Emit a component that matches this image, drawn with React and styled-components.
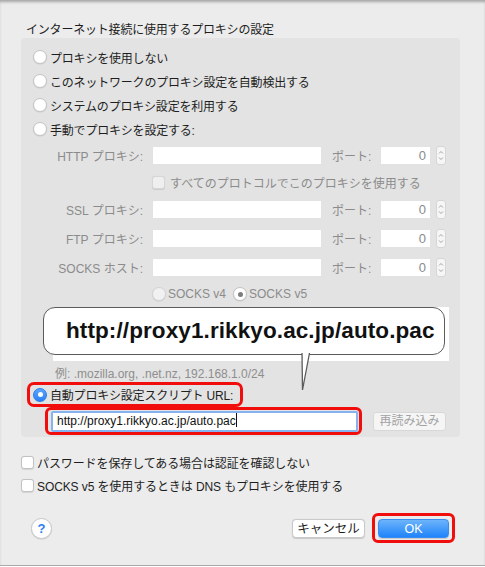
import React from "react";
import styled, { createGlobalStyle } from "styled-components";

const GlobalStyle = createGlobalStyle`
  html, body {
    margin: 0;
    padding: 0;
    background: #ffffff;
  }
  body {
    font-family: "Liberation Sans", "Noto Sans CJK JP", sans-serif;
    font-size: 12px;
    color: #1e1e1e;
  }
`;

const Window = styled.div`
  width: 485px;
  height: 566px;
  box-sizing: border-box;
  background: #ececec;
  border-bottom: 1px solid #a9a9a9;
  box-shadow: inset 0 3px 3px -1px rgba(0, 0, 0, 0.3);
  padding: 22px 30px 0 21px;
  display: flex;
  flex-direction: column;
`;

const Title = styled.div`
  padding-left: 5px;
  line-height: 16px;
  letter-spacing: -0.2px;
`;

const Panel = styled.div`
  position: relative;
  width: 439px;
  box-sizing: border-box;
  background: #e3e3e3;
  border-radius: 4px;
  padding: 7px 0 2px 0;
  display: flex;
  flex-direction: column;
`;

const RadioRow = styled.label`
  height: 24px;
  display: flex;
  align-items: center;
  gap: 3px;
  padding-left: 12px;
  letter-spacing: -0.2px;
`;

const Radio = styled.span`
  width: 14px;
  height: 14px;
  flex: none;
  box-sizing: border-box;
  border-radius: 50%;
  display: inline-flex;
  align-items: center;
  justify-content: center;
  background: ${(p) => (p.$on ? "linear-gradient(#5aa5fb, #2a80f5)" : p.$dim ? "#f1f1f1" : "#ffffff")};
  border: 1px solid ${(p) => (p.$on ? "#2a7ee8" : p.$dim ? "#d4d4d4" : "#c4c4c4")};
  box-shadow: 0 0.5px 1px rgba(0, 0, 0, 0.12);
  &::after {
    content: "";
    display: ${(p) => (p.$on || p.$dot ? "block" : "none")};
    width: 5px;
    height: 5px;
    border-radius: 50%;
    background: ${(p) => (p.$on ? "#ffffff" : "#7d7d7d")};
  }
`;

const ProxyRow = styled.div`
  height: 29px;
  display: flex;
  align-items: center;
`;

const FieldLabel = styled.span`
  width: 122px;
  margin-right: 9px;
  text-align: right;
  color: #8b8b8b;
  white-space: nowrap;
`;

const TextField = styled.div`
  width: 170px;
  height: 19px;
  box-sizing: border-box;
  background: #ffffff;
  border: 1px solid #e2e2e2;
`;

const PortLabel = styled.span`
  margin-left: 10px;
  width: 40px;
  color: #8b8b8b;
`;

const PortField = styled.div`
  margin-left: 8px;
  width: 51px;
  height: 19px;
  box-sizing: border-box;
  background: #ffffff;
  border: 1px solid #e2e2e2;
  color: #8a8a8a;
  font-size: 13px;
  line-height: 17px;
  text-align: right;
  padding-right: 4px;
`;

const StepperBox = styled.div`
  margin-left: 5px;
  width: 10px;
  height: 19px;
  box-sizing: border-box;
  border: 1px solid #d6d6d6;
  border-radius: 3px;
  background: #f6f6f6;
  display: flex;
  align-items: center;
  justify-content: center;
`;

const IndentRow = styled.div`
  height: ${(p) => p.$h}px;
  display: flex;
  align-items: center;
  padding-left: 131px;
  color: #8b8b8b;
`;

const CheckBox = styled.span`
  width: 13px;
  height: 13px;
  flex: none;
  box-sizing: border-box;
  border-radius: 3px;
  background: ${(p) => (p.$dim ? "#efefef" : "#ffffff")};
  border: 1px solid ${(p) => (p.$dim ? "#d6d6d6" : "#c2c2c2")};
  box-shadow: 0 0.5px 1px rgba(0, 0, 0, 0.1);
`;

const Option = styled.span`
  display: inline-flex;
  align-items: center;
  gap: ${(p) => p.$gap || 2}px;
  margin-right: ${(p) => p.$mr || 0}px;
`;

const Bypass = styled.div`
  margin: 1px 0 0 32px;
  width: 396px;
  height: 54px;
  background: #ffffff;
`;

const Hint = styled.div`
  margin: 5px 0 0 34px;
  line-height: 16px;
  color: #8e8e8e;
`;

const AutoHighlight = styled.label`
  margin-left: 6px;
  width: 216px;
  height: 25px;
  box-sizing: border-box;
  border: 3px solid #f20d0d;
  border-radius: 7px;
  display: flex;
  align-items: center;
  gap: 3px;
  padding-left: 3px;
  letter-spacing: -0.2px;
`;

const UrlRow = styled.div`
  display: flex;
  align-items: center;
`;

const UrlHighlight = styled.div`
  margin-left: 24px;
  width: 317px;
  height: 28px;
  box-sizing: border-box;
  border: 3px solid #f20d0d;
  border-radius: 6px;
  padding: 0 1px 0 3px;
  display: flex;
  align-items: center;
`;

const UrlInput = styled.div`
  flex: 1;
  height: 21px;
  box-sizing: border-box;
  background: #ffffff;
  border: 2px solid #86b2ef;
  border-radius: 2px;
  padding-left: 4px;
  line-height: 17px;
  color: #111;
`;

const Caret = styled.span`
  display: inline-block;
  width: 1px;
  height: 14px;
  background: #111;
  vertical-align: -2px;
`;

const ReloadButton = styled.div`
  margin-left: 11px;
  width: 73px;
  height: 19px;
  box-sizing: border-box;
  background: #f5f5f5;
  border: 1px solid #d8d8d8;
  border-radius: 3px;
  color: #a3a3a3;
  text-align: center;
  line-height: 17px;
`;

const Callout = styled.div`
  position: absolute;
  left: 22px;
  top: 269px;
  width: 402px;
  height: 48px;
  box-sizing: border-box;
  background: #ffffff;
  border: 1.5px solid #5b5b5b;
  border-radius: 12px;
  display: flex;
  align-items: center;
  padding-left: 22px;
  font-size: 22.5px;
  font-weight: bold;
  color: #111;
  letter-spacing: 0.1px;
`;

const Tail = styled.svg`
  position: absolute;
  left: 255px;
  top: 44px;
  overflow: visible;
`;

const Checks = styled.div`
  margin-top: 14px;
  display: flex;
  flex-direction: column;
`;

const CheckRow = styled.label`
  height: 23px;
  display: flex;
  align-items: center;
  gap: 3px;
  letter-spacing: -0.1px;
`;

const Footer = styled.div`
  margin-top: 15px;
  height: 32px;
  display: flex;
  align-items: center;
`;

const HelpButton = styled.div`
  margin-left: 10px;
  width: 21px;
  height: 21px;
  box-sizing: border-box;
  border-radius: 50%;
  background: #ffffff;
  border: 1px solid #cacaca;
  box-shadow: 0 0.5px 1px rgba(0, 0, 0, 0.15);
  color: #2d7ff0;
  font-weight: bold;
  font-size: 13px;
  display: flex;
  align-items: center;
  justify-content: center;
`;

const Spacer = styled.div`
  flex: 1;
`;

const Button = styled.div`
  width: ${(p) => p.$w}px;
  height: 19px;
  box-sizing: border-box;
  border-radius: 4px;
  text-align: center;
  line-height: 18px;
  font-size: 12.5px;
  background: ${(p) => (p.$primary ? "linear-gradient(#6db4fb, #1f84fb)" : "#ffffff")};
  color: ${(p) => (p.$primary ? "#ffffff" : "#1e1e1e")};
  border: 1px solid ${(p) => (p.$primary ? "#3b8cf0" : "#c9c9c9")};
  box-shadow: 0 0.5px 1px rgba(0, 0, 0, 0.15);
`;

const OkHighlight = styled.div`
  margin-left: 7px;
  width: 83px;
  height: 30px;
  box-sizing: border-box;
  border: 3px solid #f20d0d;
  border-radius: 6px;
  display: flex;
  align-items: center;
  justify-content: center;
`;

function Stepper() {
  return (
    <StepperBox>
      <svg width="6" height="13" viewBox="0 0 6 13">
        <path d="M1 4.5 L3 2.5 L5 4.5 M1 8.5 L3 10.5 L5 8.5" fill="none" stroke="#9a9a9a" strokeWidth="0.9" />
      </svg>
    </StepperBox>
  );
}

function ProxyField({ label }) {
  return (
    <ProxyRow>
      <FieldLabel>{label}</FieldLabel>
      <TextField />
      <PortLabel>ポート:</PortLabel>
      <PortField>0</PortField>
      <Stepper />
    </ProxyRow>
  );
}

const modes = [
  "プロキシを使用しない",
  "このネットワークのプロキシ設定を自動検出する",
  "システムのプロキシ設定を利用する",
  "手動でプロキシを設定する:",
];

export default function App() {
  return (
    <>
      <GlobalStyle />
      <Window>
        <Title>インターネット接続に使用するプロキシの設定</Title>
        <Panel>
          {modes.map((m) => (
            <RadioRow key={m}>
              <Radio />
              {m}
            </RadioRow>
          ))}
          <ProxyField label="HTTP プロキシ:" />
          <IndentRow $h={25}>
            <Option $gap={5}>
              <CheckBox $dim />
              すべてのプロトコルでこのプロキシを使用する
            </Option>
          </IndentRow>
          <ProxyField label="SSL プロキシ:" />
          <ProxyField label="FTP プロキシ:" />
          <ProxyField label="SOCKS ホスト:" />
          <IndentRow $h={24}>
            <Option $mr={7}>
              <Radio $dim />
              SOCKS v4
            </Option>
            <Option>
              <Radio $dot />
              SOCKS v5
            </Option>
          </IndentRow>
          <Bypass />
          <Hint>例: .mozilla.org, .net.nz, 192.168.1.0/24</Hint>
          <AutoHighlight>
            <Radio $on />
            自動プロキシ設定スクリプト URL:
          </AutoHighlight>
          <UrlRow>
            <UrlHighlight>
              <UrlInput>
                http://proxy1.rikkyo.ac.jp/auto.pac
                <Caret />
              </UrlInput>
            </UrlHighlight>
            <ReloadButton>再読み込み</ReloadButton>
          </UrlRow>
          <Callout>
            http://proxy1.rikkyo.ac.jp/auto.pac
            <Tail width="12" height="42" viewBox="0 0 12 42">
              <polygon points="3,-1 11,-1 4,38 3,38" fill="#ffffff" />
              <path d="M3 1 L3.5 38 L10.5 1" fill="none" stroke="#5b5b5b" strokeWidth="1.3" />
            </Tail>
          </Callout>
        </Panel>
        <Checks>
          <CheckRow>
            <CheckBox />
            パスワードを保存してある場合は認証を確認しない
          </CheckRow>
          <CheckRow>
            <CheckBox />
            SOCKS v5 を使用するときは DNS もプロキシを使用する
          </CheckRow>
        </Checks>
        <Footer>
          <HelpButton>?</HelpButton>
          <Spacer />
          <Button $w={73}>キャンセル</Button>
          <OkHighlight>
            <Button $w={71} $primary>
              OK
            </Button>
          </OkHighlight>
        </Footer>
      </Window>
    </>
  );
}
